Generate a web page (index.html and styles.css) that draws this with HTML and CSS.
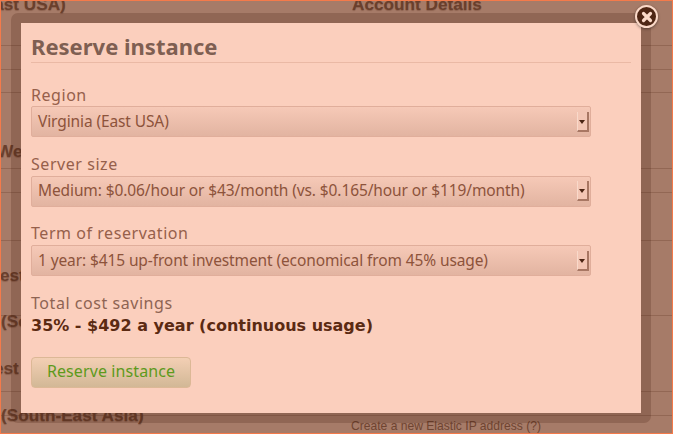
FILE: index.html
```html
<!DOCTYPE html>
<html lang="en">
<head>
<meta charset="utf-8">
<title>Reserve instance</title>
<link rel="stylesheet" href="styles.css">
</head>
<body>
<div class="page">
  <div class="line" style="top:45px"></div>
  <div class="line" style="top:69px"></div>
  <div class="line" style="top:92px"></div>
  <div class="line" style="top:168px"></div>
  <div class="line" style="top:192px"></div>
  <div class="line" style="top:240px"></div>
  <div class="line" style="top:315px"></div>
  <div class="line" style="top:391px"></div>
  <div class="line" style="top:415px"></div>
  <span class="bg h-a">(East USA)</span>
  <span class="bg h-b">Account Details</span>
  <span class="bg h-c">West</span>
  <span class="bg h-d">West</span>
  <span class="bg h-e">(South</span>
  <span class="bg h-f">West</span>
  <span class="bg h-g">(South-East Asia)</span>
  <span class="bg-link">Create a new Elastic IP address (?)</span>
</div>
<div class="overlay"></div>
<div class="modal">
  <div class="panel">
    <h1 class="title">Reserve instance</h1>
    <div class="field">
      <label class="label">Region</label>
      <div class="select"><span>Virginia (East USA)</span><i class="arrow"></i></div>
    </div>
    <div class="field">
      <label class="label">Server size</label>
      <div class="select"><span>Medium: $0.06/hour or $43/month (vs. $0.165/hour or $119/month)</span><i class="arrow"></i></div>
    </div>
    <div class="field">
      <label class="label">Term of reservation</label>
      <div class="select"><span>1 year: $415 up-front investment (economical from 45% usage)</span><i class="arrow"></i></div>
    </div>
    <div class="label savings-label">Total cost savings</div>
    <div class="savings">35% - $492 a year (continuous usage)</div>
    <button class="btn" type="button">Reserve instance</button>
  </div>
</div>
<div class="close"><svg width="12" height="12" viewBox="0 0 12 12"><path d="M2.500 2.500l7 7M9.500 2.500l-7 7" stroke="#fbd9c8" stroke-width="3.200" stroke-linecap="round"/></svg></div>
</body>
</html>
```
FILE: styles.css
```css
* { box-sizing: border-box; }
html, body { margin: 0; height: 100%; overflow: hidden; }
body { position: relative; width: 673px; height: 434px; background: #fff; font-family: "Noto Sans", sans-serif; }
.page { position: absolute; inset: 0; overflow: hidden; font-family: "Liberation Sans", sans-serif; color: #6a6a6a; }
.line { position: absolute; left: 0; right: 0; height: 1px; background: #ccc; }
.bg { position: absolute; font-weight: bold; font-size: 17.2px; line-height: 20px; white-space: nowrap; text-shadow: 0 1px 1px rgba(0,0,0,.25); }
.h-a { left: -23px; top: -6px; }
.h-b { left: 352px; top: -6px; }
.h-c { left: -3px; top: 141px; }
.h-d { left: -16px; top: 265px; }
.h-e { left: 1px; top: 311px; }
.h-f { left: -22px; top: 358px; }
.h-g { left: 1px; top: 405px; }
.bg-link { position: absolute; left: 351px; top: 419px; font-size: 12.1px; line-height: 14px; white-space: nowrap; color: #777; }
.overlay { position: absolute; inset: 0; background: rgba(107,35,3,.6); border: 1px solid #f47a4a; }
.modal { position: absolute; left: 11px; top: 13px; width: 640px; height: 410px; border: 10px solid rgba(60,20,5,.2); border-radius: 7px; }
.panel { height: 100%; background: #fbcfbd; padding: 10px; color: #8a5a48; }
.title { margin: 0 0 23px; height: 30px; font-family: "Noto Sans", sans-serif; font-size: 22px; line-height: 27px; font-weight: bold; color: #7f5f52; border-bottom: 1px solid #eab9a5; }
.field { margin-bottom: 17.5px; }
.field:first-of-type .select { margin-top: 1px; }
.label { display: block; font-size: 16px; line-height: 19px; color: #96604b; letter-spacing: .55px; }
.select { display: flex; align-items: center; justify-content: space-between; width: 560px; height: 31px; margin-top: 2px; padding: 0 1px 2px 6px; border: 1px solid #e0ae9b; border-radius: 2px; background: linear-gradient(#f6c9b7, #e2b4a1); font-size: 15.5px; letter-spacing: -.11px; color: #8d533b; }
.arrow { position: relative; display: block; width: 12px; height: 20px; margin-top: 2px; background: #f3c6b4; border-right: 2px solid #a87763; border-bottom: 2px solid #a87763; border-left: 1px solid #f9d9ca; }
.arrow::after { content: ""; position: absolute; left: 1px; top: 8px; border: 3px solid transparent; border-top: 4px solid #4a2413; border-bottom: 0; }
.savings-label { margin-top: .5px; color: #8e6453; }
.savings { margin-top: 1px; font-family: "DejaVu Sans", sans-serif; font-weight: bold; font-size: 16px; line-height: 24px; color: #5b2a12; }
.btn { display: block; width: 160px; height: 31px; margin-top: 19.5px; padding: 0 0 3px; border: 1px solid #dcb896; border-radius: 4px; background: linear-gradient(#f3cfb4, #d2b896); font-family: inherit; font-size: 16px; letter-spacing: .1px; color: #5d9a1c; }
.close { position: absolute; left: 635px; top: 5px; width: 23px; height: 23px; display: flex; align-items: center; justify-content: center; border-radius: 50%; background: #4e2614; border: 2px solid #fbd9c8; box-shadow: 0 1px 3px rgba(0,0,0,.4); }
```
